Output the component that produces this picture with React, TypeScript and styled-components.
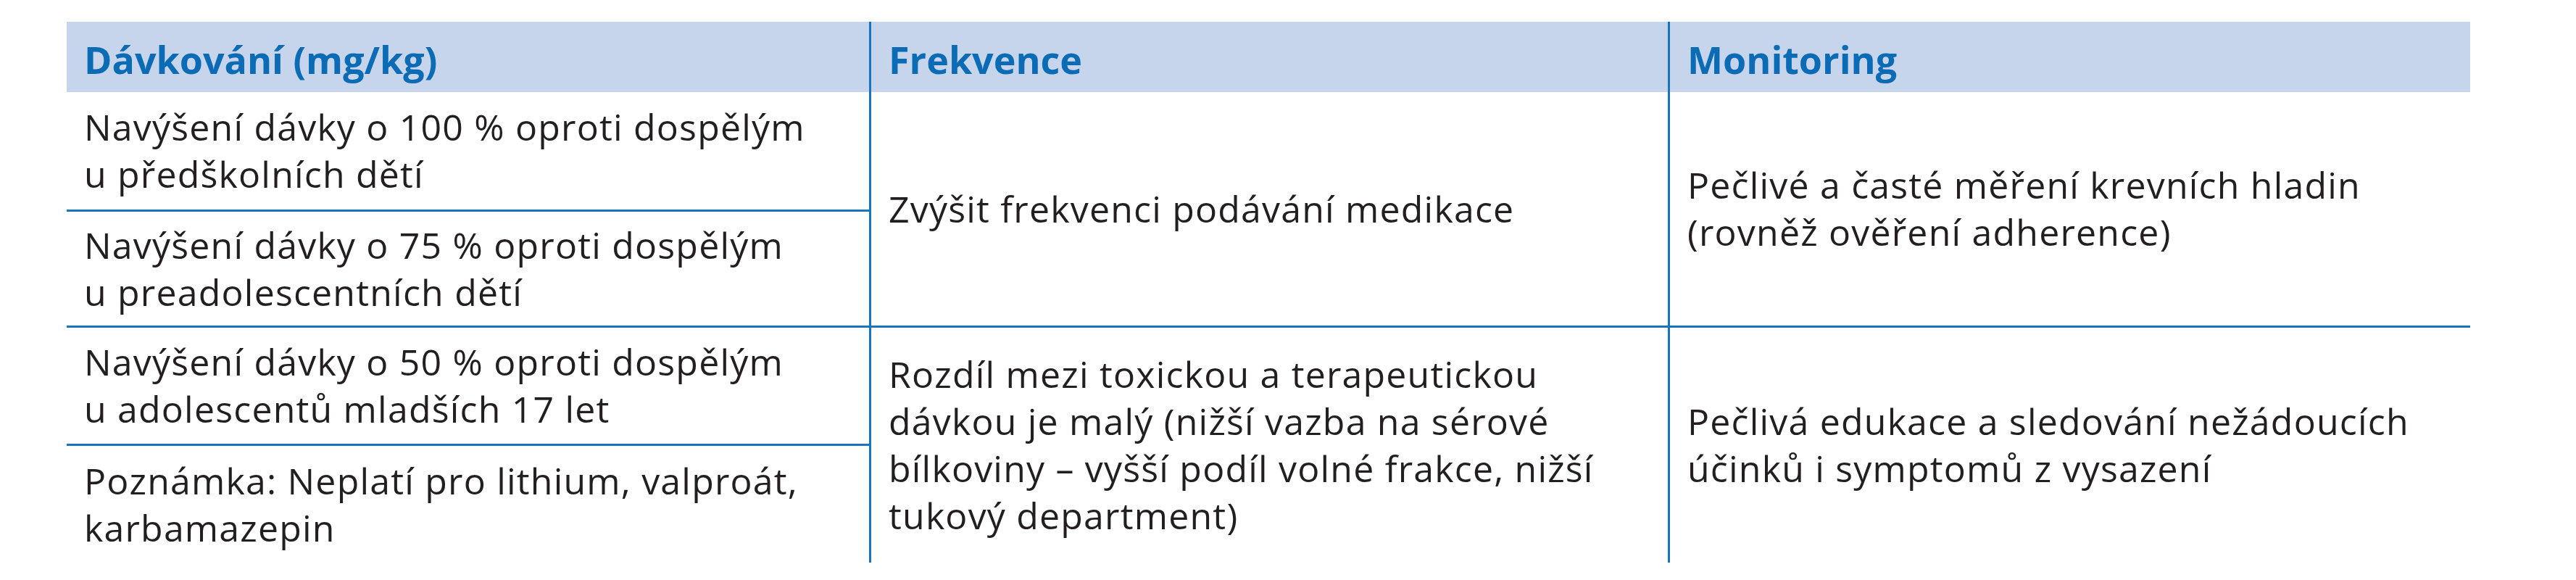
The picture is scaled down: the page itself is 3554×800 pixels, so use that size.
import React from 'react'
import styled, { createGlobalStyle } from 'styled-components'

const colors = {
  line: '#1874bd',
  head: '#c7d5ec',
  headText: '#0b6cb5',
  text: '#231f20',
}

const GlobalStyle = createGlobalStyle`
  * { box-sizing: border-box; }
  body {
    margin: 0;
    background: #fff;
    font-family: 'Open Sans', 'Noto Sans', sans-serif;
  }
`

const Page = styled.div`
  padding: 30px 0 0 92px;
`

const Table = styled.div`
  display: grid;
  grid-template-columns: 1107px 1102px 1107px;
  grid-template-rows: 97px 162px 160px 163px 164px;
  width: 3316px;
`

const HeadCell = styled.div<{ $divider?: boolean }>`
  display: flex;
  align-items: center;
  padding: 6px 24px 0;
  background: ${colors.head};
  color: ${colors.headText};
  font-size: 52px;
  font-weight: 700;
  border-left: ${(p) => (p.$divider ? `3px solid ${colors.line}` : 'none')};
`

const Cell = styled.div<{ $divider?: boolean; $rule?: boolean; $span?: number }>`
  display: flex;
  align-items: center;
  padding: 0 24px;
  grid-row: span ${(p) => p.$span ?? 1};
  color: ${colors.text};
  font-size: 50px;
  line-height: 65px;
  letter-spacing: 1.2px;
  white-space: nowrap;
  border-left: ${(p) => (p.$divider ? `3px solid ${colors.line}` : 'none')};
  border-top: ${(p) => (p.$rule ? `3px solid ${colors.line}` : 'none')};
`

const Lines = ({ lines }: { lines: string[] }) => (
  <div>
    {lines.map((l, i) => (
      <React.Fragment key={i}>
        {l}
        {i < lines.length - 1 && <br />}
      </React.Fragment>
    ))}
  </div>
)

export default function App(): React.ReactElement {
  return (
    <Page>
      <GlobalStyle />
      <Table>
        <HeadCell>Dávkování (mg/kg)</HeadCell>
        <HeadCell $divider>Frekvence</HeadCell>
        <HeadCell $divider>Monitoring</HeadCell>

        <Cell>
          <Lines lines={['Navýšení dávky o 100 % oproti dospělým', 'u předškolních dětí']} />
        </Cell>
        <Cell $divider $span={2}>
          <Lines lines={['Zvýšit frekvenci podávání medikace']} />
        </Cell>
        <Cell $divider $span={2}>
          <Lines lines={['Pečlivé a časté měření krevních hladin', '(rovněž ověření adherence)']} />
        </Cell>
        <Cell $rule>
          <Lines lines={['Navýšení dávky o 75 % oproti dospělým', 'u preadolescentních dětí']} />
        </Cell>

        <Cell $rule>
          <Lines lines={['Navýšení dávky o 50 % oproti dospělým', 'u adolescentů mladších 17 let']} />
        </Cell>
        <Cell $divider $rule $span={2}>
          <Lines
            lines={[
              'Rozdíl mezi toxickou a terapeutickou',
              'dávkou je malý (nižší vazba na sérové',
              'bílkoviny – vyšší podíl volné frakce, nižší',
              'tukový department)',
            ]}
          />
        </Cell>
        <Cell $divider $rule $span={2}>
          <Lines lines={['Pečlivá edukace a sledování nežádoucích', 'účinků i symptomů z vysazení']} />
        </Cell>
        <Cell $rule>
          <Lines lines={['Poznámka: Neplatí pro lithium, valproát,', 'karbamazepin']} />
        </Cell>
      </Table>
    </Page>
  )
}
